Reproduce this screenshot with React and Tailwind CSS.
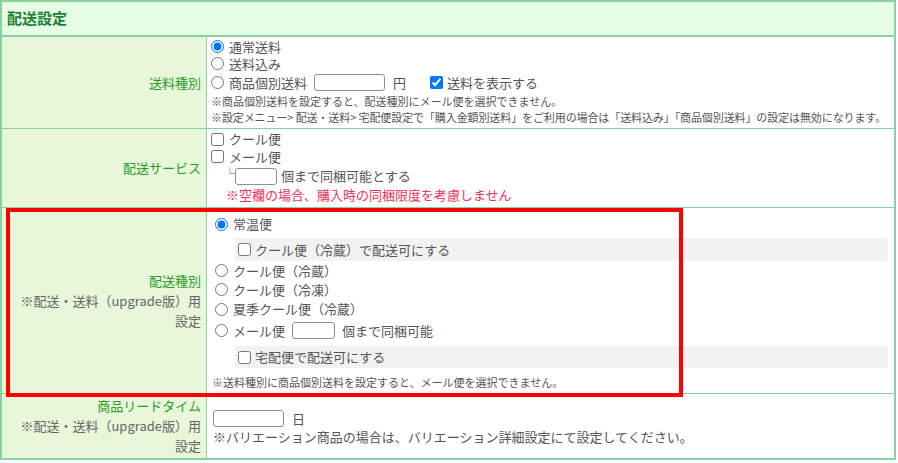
const font = { fontFamily: '"Noto Sans CJK JP", "Noto Sans", sans-serif' };

const labelBg = 'bg-[#e8f6da]';

function Radio({ checked, name }) {
  return <input type="radio" name={name} defaultChecked={checked} className="m-0 w-[13px] h-[13px] shrink-0" />;
}

function Check({ checked }) {
  return <input type="checkbox" defaultChecked={checked} className="m-0 w-[13px] h-[13px] shrink-0" />;
}

function Box({ w }) {
  return <span className={`inline-block h-[17px] border border-[#8f8f8f] rounded-[3px] bg-white ${w}`} />;
}

function Row({ h, label, children, last }) {
  return (
    <div className={`flex ${h} ${last ? '' : 'border-b border-[#8ad0a2]'}`}>
      <div className={`w-[205px] shrink-0 border-r border-[#8ad0a2] ${labelBg} flex flex-col justify-center items-end pr-[5px] text-right text-[13px] leading-[20px]`}>
        {label}
      </div>
      <div className="flex-1 min-w-0 text-[#555] text-[13px] leading-[16px]">{children}</div>
    </div>
  );
}

export default function App() {
  return (
    <div className="bg-white w-[898px] h-[463px]" style={font}>
      <div className="relative w-[896px] border-2 border-[#8ad0a2]">
        {/* Header */}
        <div className="h-[35px] bg-[#e4fde4] border-b-2 border-[#8ad0a2] flex items-center px-[5px]">
          <span className="text-[15px] font-bold text-[#1c7f36]">配送設定</span>
        </div>

        {/* 送料種別 */}
        <Row h="h-[92px]" label={<span className="text-[#2a9c2a]">送料種別</span>}>
          <div className="pl-[4px] pt-[1px]">
            <div className="h-[17px] flex items-center gap-[5px]"><Radio name="fee" checked />通常送料</div>
            <div className="h-[17px] flex items-center gap-[5px]"><Radio name="fee" />送料込み</div>
            <div className="h-[21px] flex items-center gap-[5px]">
              <Radio name="fee" />商品個別送料
              <span className="ml-[2px] flex"><Box w="w-[71px]" /></span>
              <span className="ml-[3px]">円</span>
              <span className="ml-[19px] flex items-center gap-[4px]"><Check checked />送料を表示する</span>
            </div>
            <div className="h-[16px] flex items-center text-[11px] whitespace-nowrap">※商品個別送料を設定すると、配送種別にメール便を選択できません。</div>
            <div className="h-[16px] flex items-center text-[11px] whitespace-nowrap tracking-[-0.1px]">※設定メニュー&gt; 配送・送料&gt; 宅配便設定で「購入金額別送料」をご利用の場合は「送料込み」「商品個別送料」の設定は無効になります。</div>
          </div>
        </Row>

        {/* 配送サービス */}
        <Row h="h-[79px]" label={<span className="text-[#2a9c2a]">配送サービス</span>}>
          <div className="pl-[4px] pt-[1px]">
            <div className="h-[18px] flex items-center gap-[5px]"><Check />クール便</div>
            <div className="h-[17px] flex items-center gap-[5px]"><Check />メール便</div>
            <div className="h-[22px] flex items-center pl-[13px]">
              <span className="text-[12px] leading-none -mt-[4px] mr-[-1px] text-[#666]">└</span>
              <Box w="w-[42px]" />
              <span className="ml-[4px]">個まで同梱可能とする</span>
            </div>
            <div className="h-[15px] flex items-center pl-[15px] text-[#f0325a] whitespace-nowrap">※空欄の場合、購入時の同梱限度を考慮しません</div>
          </div>
        </Row>

        {/* 配送種別 */}
        <Row
          h="h-[186px]"
          label={
            <>
              <span className="text-[#2a9c2a]">配送種別</span>
              <span className="text-[#666]">※配送・送料（upgrade版）用</span>
              <span className="text-[#666]">設定</span>
            </>
          }
        >
          <div className="pt-[6px]">
            <div className="h-[20px] pl-[8px] flex items-center gap-[5px]"><Radio name="kind" checked />常温便</div>
            <div className="mt-[4px] h-[23px] ml-[28px] mr-[6px] bg-[#f2f2f2] pl-[3px] flex items-center gap-[4px]"><Check />クール便（冷蔵）で配送可にする</div>
            <div className="h-[19px] pl-[8px] flex items-center gap-[5px]"><Radio name="kind" />クール便（冷蔵）</div>
            <div className="h-[19px] pl-[8px] flex items-center gap-[5px]"><Radio name="kind" />クール便（冷凍）</div>
            <div className="h-[20px] pl-[8px] flex items-center gap-[5px]"><Radio name="kind" />夏季クール便（冷蔵）</div>
            <div className="h-[23px] pl-[8px] flex items-center gap-[5px]">
              <Radio name="kind" />メール便
              <span className="ml-[2px] flex"><Box w="w-[43px]" /></span>
              <span className="ml-[2px]">個まで同梱可能</span>
            </div>
            <div className="mt-[4px] h-[22px] ml-[28px] mr-[6px] bg-[#f2f2f2] pl-[3px] flex items-center gap-[4px]"><Check />宅配便で配送可にする</div>
            <div className="mt-[6px] h-[16px] pl-[5px] flex items-center text-[11px] whitespace-nowrap">※送料種別に商品個別送料を設定すると、メール便を選択できません。</div>
          </div>
        </Row>

        {/* 商品リードタイム */}
        <Row
          h="h-[64px]"
          last
          label={
            <>
              <span className="text-[#2a9c2a]">商品リードタイム</span>
              <span className="text-[#666]">※配送・送料（upgrade版）用</span>
              <span className="text-[#666]">設定</span>
            </>
          }
        >
          <div className="pl-[6px] pt-[15px]">
            <div className="h-[19px] flex items-center">
              <Box w="w-[71px]" />
              <span className="ml-[8px]">日</span>
            </div>
            <div className="h-[18px] flex items-center whitespace-nowrap">※バリエーション商品の場合は、バリエーション詳細設定にて設定してください。</div>
          </div>
        </Row>

        {/* highlight annotation */}
        <div className="absolute left-[4px] top-[206px] w-[677px] h-[189px] border-4 border-[#ff0000] pointer-events-none" />
      </div>
    </div>
  );
}
